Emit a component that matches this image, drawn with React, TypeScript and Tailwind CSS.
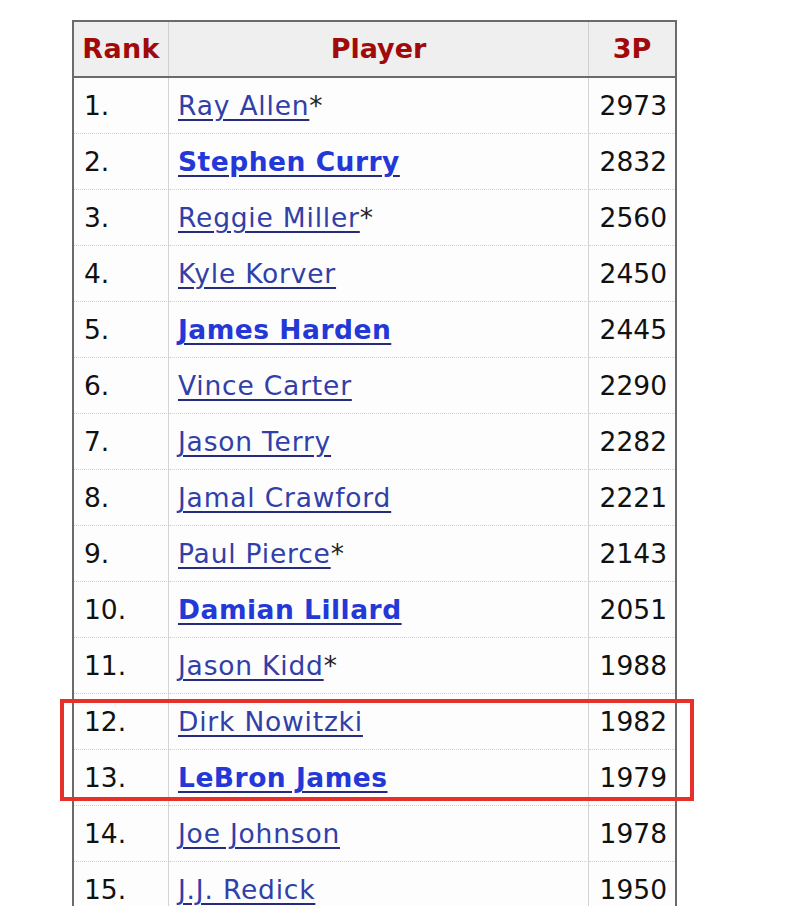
import React from "react";

const rows: { r: string; name: string; bold?: boolean; star?: boolean; p: string }[] = [
  { r: "1.", name: "Ray Allen", star: true, p: "2973" },
  { r: "2.", name: "Stephen Curry", bold: true, p: "2832" },
  { r: "3.", name: "Reggie Miller", star: true, p: "2560" },
  { r: "4.", name: "Kyle Korver", p: "2450" },
  { r: "5.", name: "James Harden", bold: true, p: "2445" },
  { r: "6.", name: "Vince Carter", p: "2290" },
  { r: "7.", name: "Jason Terry", p: "2282" },
  { r: "8.", name: "Jamal Crawford", p: "2221" },
  { r: "9.", name: "Paul Pierce", star: true, p: "2143" },
  { r: "10.", name: "Damian Lillard", bold: true, p: "2051" },
  { r: "11.", name: "Jason Kidd", star: true, p: "1988" },
  { r: "12.", name: "Dirk Nowitzki", p: "1982" },
  { r: "13.", name: "LeBron James", bold: true, p: "1979" },
  { r: "14.", name: "Joe Johnson", p: "1978" },
  { r: "15.", name: "J.J. Redick", p: "1950" },
];

export default function App() {
  return (
    <div
      className="relative w-[806px] h-[906px] overflow-hidden bg-white"
      style={{ fontFamily: '"DejaVu Sans", Verdana, sans-serif' }}
    >
      <div className="ml-[72px] mt-[20px] w-[605px] border-2 border-b-0 border-[#6b6b6b]">
        <div className="grid grid-cols-[95px_420px_86px] h-[56px] bg-[#efefef] border-b-2 border-[#6b6b6b] text-[27px] font-bold text-[#a00a0a]">
          <div className="flex items-center justify-center border-r border-[#cfcfcf] tracking-[0.3px]">Rank</div>
          <div className="flex items-center justify-center border-r border-[#cfcfcf]">Player</div>
          <div className="flex items-center justify-center">3P</div>
        </div>
        {rows.map((row) => (
          <div
            key={row.r}
            className="grid grid-cols-[95px_420px_86px] h-[56px] text-[26.5px] text-[#111] bg-[#fdfdfd]"
          >
            <div className="flex items-center pl-[10px] pt-[1px] border-r border-[#d4d4d4] border-b border-b-[#d0d0d0] border-dotted [border-right-style:solid]">
              {row.r}
            </div>
            <div className="flex items-center pl-[9px] pt-[1px] border-r border-[#d4d4d4] border-b border-b-[#d0d0d0] border-dotted [border-right-style:solid]">
              <span
                className={
                  "underline decoration-[#262b80] underline-offset-[4px] " +
                  (row.bold
                    ? "font-bold text-[#2438d8] tracking-[0.5px]"
                    : "text-[#3040a8] tracking-[0.8px]")
                }
              >
                {row.name}
              </span>
              {row.star ? <span className="text-[#222]">*</span> : null}
            </div>
            <div className="flex items-center justify-end pr-[8px] pt-[1px] border-b border-b-[#d0d0d0] border-dotted">
              {row.p}
            </div>
          </div>
        ))}
      </div>
      <div className="absolute left-[60px] top-[699px] w-[634px] h-[102px] border-[4px] border-[#e8302a]" />
    </div>
  );
}
